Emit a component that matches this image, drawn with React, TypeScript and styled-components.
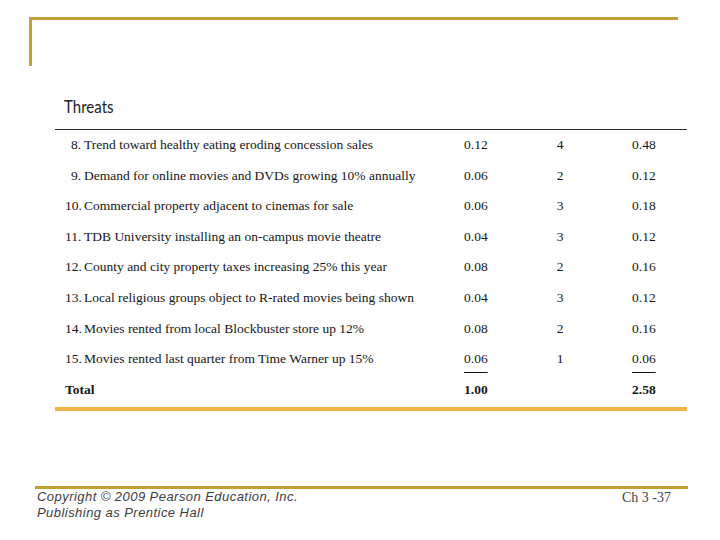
import React from "react";
import styled, { createGlobalStyle } from "styled-components";

const GlobalStyle = createGlobalStyle`
  html, body {
    margin: 0;
    padding: 0;
    background: #ffffff;
  }
`;

const GOLD = "#c1a131";

const Slide = styled.div`
  width: 720px;
  height: 540px;
  box-sizing: border-box;
  padding-top: 17px;
  display: flex;
  flex-direction: column;
  background: #ffffff;
  overflow: hidden;
`;

const TitleFrame = styled.div`
  margin-left: 29px;
  width: 649px;
  height: 49px;
  box-sizing: border-box;
  border-top: 3px solid ${GOLD};
  border-left: 3px solid ${GOLD};
`;

const TableArea = styled.div`
  margin-left: 55px;
  width: 632px;
`;

const Heading = styled.div`
  margin-top: 31px;
  padding: 0 0 11px 9px;
  line-height: 20px;
  border-bottom: 1px solid #2a2a2a;
`;

const HeadingText = styled.span`
  display: inline-block;
  font-family: Lato, "Open Sans", sans-serif;
  font-size: 17.5px;
  color: #222222;
  transform: scaleX(0.86);
  transform-origin: left center;
`;

const Row = styled.div<{ $bold?: boolean }>`
  display: grid;
  grid-template-columns: 409px 60px 72px 1fr;
  height: 30.6px;
  line-height: 30.6px;
  font-family: "Liberation Serif", "Times New Roman", serif;
  font-size: 13.5px;
  font-weight: ${(p) => (p.$bold ? 700 : 400)};
  color: #161616;
  white-space: nowrap;
`;

const Label = styled.div`
  display: flex;
  padding-left: 10px;
`;

const ItemNo = styled.span`
  width: 16px;
  text-align: right;
`;

const ItemText = styled.span`
  margin-left: 3px;
`;

const Cell = styled.div<{ $align?: "left" | "center"; $pad?: number }>`
  text-align: ${(p) => p.$align ?? "left"};
  padding-left: ${(p) => p.$pad ?? 0}px;
`;

const Underlined = styled.span`
  text-decoration: underline;
  text-decoration-thickness: 1px;
  text-underline-offset: 9px;
`;

const AccentBar = styled.div`
  margin-top: 2px;
  height: 4px;
  background: #f3b54a;
`;

const Footer = styled.div`
  margin-top: auto;
  margin-left: 35px;
  width: 653px;
  box-sizing: border-box;
  border-top: 3px solid ${GOLD};
  padding: 0 17px 19px 2px;
  display: flex;
  justify-content: space-between;
  align-items: flex-start;
`;

const Copyright = styled.div`
  font-family: "Liberation Sans", Arial, sans-serif;
  font-style: italic;
  font-size: 13px;
  line-height: 16px;
  letter-spacing: 0.45px;
  color: #3c3c3c;
`;

const PageNo = styled.div`
  font-family: "Liberation Serif", "Times New Roman", serif;
  font-size: 14px;
  line-height: 16px;
  margin-top: 1px;
  color: #444444;
`;

type Threat = {
  no: number;
  text: string;
  weight: string;
  rating: string;
  score: string;
};

const threats: Threat[] = [
  { no: 8, text: "Trend toward healthy eating eroding concession sales", weight: "0.12", rating: "4", score: "0.48" },
  { no: 9, text: "Demand for online movies and DVDs growing 10% annually", weight: "0.06", rating: "2", score: "0.12" },
  { no: 10, text: "Commercial property adjacent to cinemas for sale", weight: "0.06", rating: "3", score: "0.18" },
  { no: 11, text: "TDB University installing an on-campus movie theatre", weight: "0.04", rating: "3", score: "0.12" },
  { no: 12, text: "County and city property taxes increasing 25% this year", weight: "0.08", rating: "2", score: "0.16" },
  { no: 13, text: "Local religious groups object to R-rated movies being shown", weight: "0.04", rating: "3", score: "0.12" },
  { no: 14, text: "Movies rented from local Blockbuster store up 12%", weight: "0.08", rating: "2", score: "0.16" },
  { no: 15, text: "Movies rented last quarter from Time Warner up 15%", weight: "0.06", rating: "1", score: "0.06" },
];

export default function App() {
  return (
    <>
      <GlobalStyle />
      <Slide>
        <TitleFrame />
        <TableArea>
          <Heading>
            <HeadingText>Threats</HeadingText>
          </Heading>
          {threats.map((t, i) => {
            const last = i === threats.length - 1;
            return (
              <Row key={t.no}>
                <Label>
                  <ItemNo>{t.no}.</ItemNo>
                  <ItemText>{t.text}</ItemText>
                </Label>
                <Cell>{last ? <Underlined>{t.weight}</Underlined> : t.weight}</Cell>
                <Cell $align="center">{t.rating}</Cell>
                <Cell $pad={36}>{last ? <Underlined>{t.score}</Underlined> : t.score}</Cell>
              </Row>
            );
          })}
          <Row $bold>
            <Label>Total</Label>
            <Cell>1.00</Cell>
            <Cell $align="center" />
            <Cell $pad={36}>2.58</Cell>
          </Row>
          <AccentBar />
        </TableArea>
        <Footer>
          <Copyright>
            Copyright © 2009 Pearson Education, Inc.
            <br />
            Publishing as Prentice Hall
          </Copyright>
          <PageNo>Ch 3 -37</PageNo>
        </Footer>
      </Slide>
    </>
  );
}
